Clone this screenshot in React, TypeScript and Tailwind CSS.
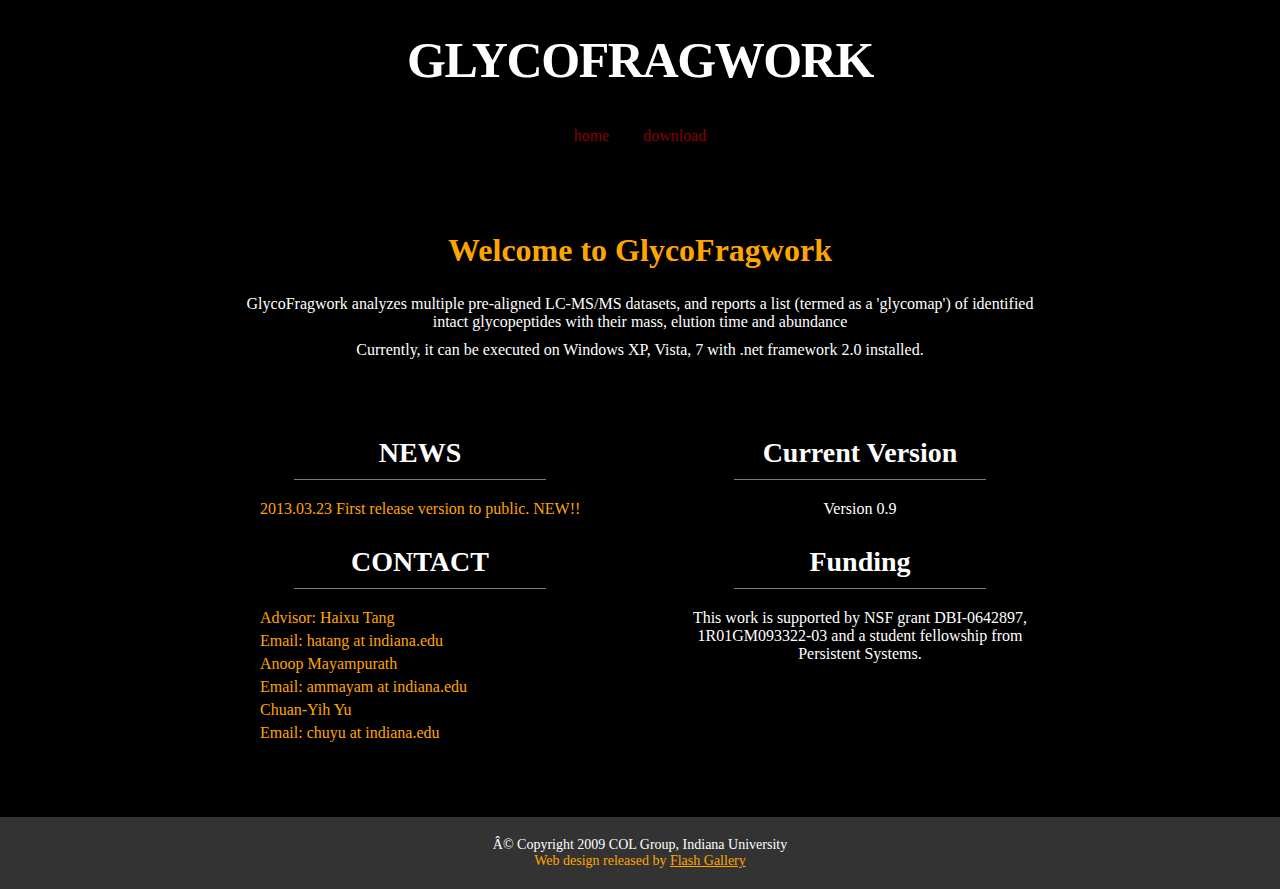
import React from "react";

const contacts = [
  "Advisor: Haixu Tang",
  "Email: hatang at indiana.edu",
  "Anoop Mayampurath",
  "Email: ammayam at indiana.edu",
  "Chuan-Yih Yu",
  "Email: chuyu at indiana.edu",
];

const SectionTitle = ({ children, className = "" }: { children: React.ReactNode; className?: string }) => (
  <div className={className}>
    <h2 className="text-center text-[28px] font-bold leading-[34px] text-white">{children}</h2>
    <hr className="mx-auto mt-[9px] w-[252px] border-0 border-t border-[#7a7a7a]" />
  </div>
);

const App = () => {
  return (
    <div
      className="flex min-h-screen flex-col bg-black text-white"
      style={{ fontFamily: '"Liberation Serif", "Times New Roman", serif' }}
    >
      <header className="text-center">
        <h1 className="mt-[28px] text-[50px] font-bold leading-[64px] tracking-[-1.4px]">GLYCOFRAGWORK</h1>
        <nav className="mt-[35px] flex justify-center gap-[34px] text-[16px] leading-[18px] text-[#8b0000]">
          <a href="#">home</a>
          <a href="#">download</a>
        </nav>
      </header>

      <main className="mx-auto w-[800px]">
        <section className="mt-[87px] text-center">
          <h2 className="text-[32px] font-bold leading-[36px] text-[#ffa500]">Welcome to GlycoFragwork</h2>
          <p className="mt-[27px] text-[16px] leading-[18px]">
            GlycoFragwork analyzes multiple pre-aligned LC-MS/MS datasets, and reports a list (termed as a 'glycomap') of identified
            intact glycopeptides with their mass, elution time and abundance
          </p>
          <p className="mt-[10px] text-[16px] leading-[18px]">
            Currently, it can be executed on Windows XP, Vista, 7 with .net framework 2.0 installed.
          </p>
        </section>

        <section className="mt-[77px] grid grid-cols-[360px_360px] gap-[80px]">
          <div>
            <SectionTitle>NEWS</SectionTitle>
            <p className="mt-[19px] pl-[20px] text-[16px] leading-[20px] text-[#ffa500]">
              2013.03.23 First release version to public. NEW!!
            </p>
            <SectionTitle className="mt-[26px]">CONTACT</SectionTitle>
            <ul className="mt-[17px] pl-[20px] text-[16px] leading-[23px] text-[#ffa500]">
              {contacts.map((c) => (
                <li key={c}>{c}</li>
              ))}
            </ul>
          </div>
          <div>
            <SectionTitle>Current Version</SectionTitle>
            <p className="mt-[19px] text-center text-[16px] leading-[20px]">Version 0.9</p>
            <SectionTitle className="mt-[26px]">Funding</SectionTitle>
            <p className="mx-auto mt-[20px] w-[340px] text-center text-[16px] leading-[18px]">
              This work is supported by NSF grant DBI-0642897, 1R01GM093322-03 and a student fellowship from Persistent Systems.
            </p>
          </div>
        </section>
      </main>

      <footer className="mt-auto h-[72px] bg-[#333333] pt-[20px] text-center text-[14px] leading-[16px]">
        <p className="text-white">Â© Copyright 2009 COL Group, Indiana University</p>
        <p className="text-[#ffa500]">
          Web design released by <a href="#" className="underline">Flash Gallery</a>
        </p>
      </footer>
    </div>
  );
};

export default App;
